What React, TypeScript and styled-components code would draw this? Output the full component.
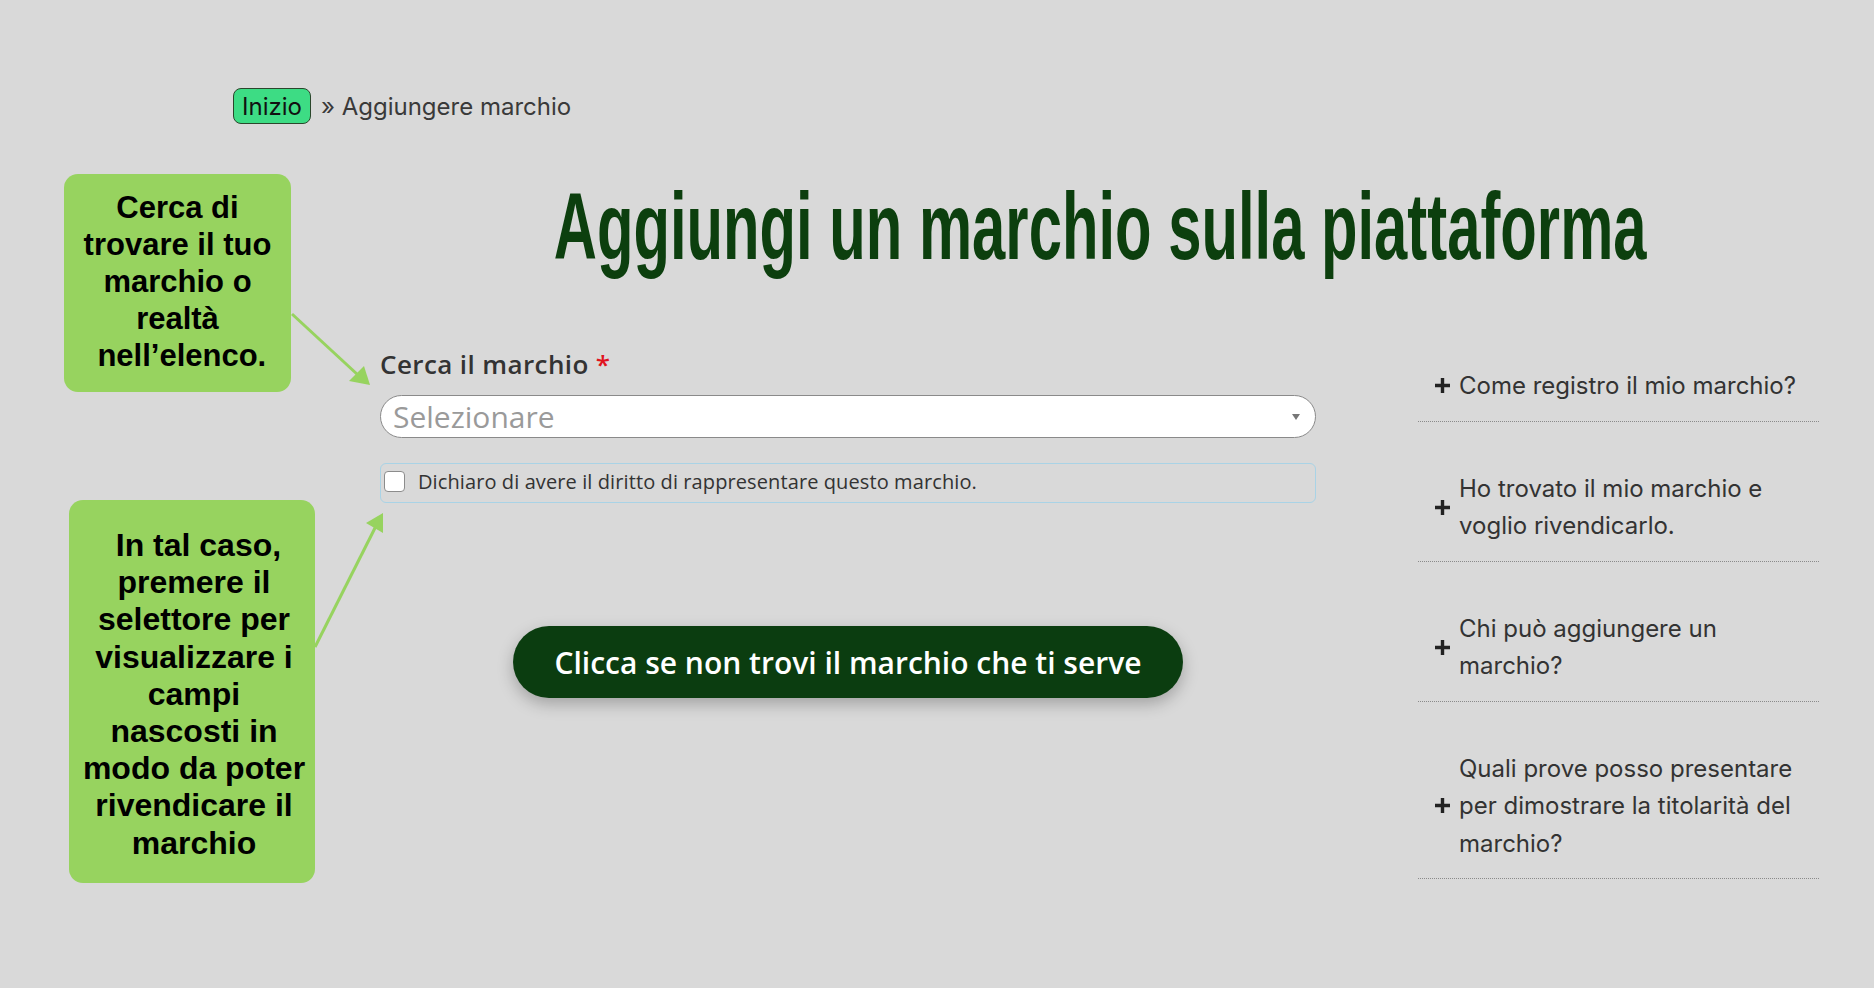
import React from "react";
import styled, { createGlobalStyle } from "styled-components";

const GlobalStyle = createGlobalStyle`
  html, body { margin: 0; padding: 0; }
  body { background: #d9d9d9; font-family: "Inter", "Liberation Sans", sans-serif; }
`;

const Page = styled.div`
  position: relative;
  width: 1874px;
  min-height: 988px;
  padding-top: 88px;
  box-sizing: border-box;
  overflow: hidden;
`;

const Breadcrumb = styled.nav`
  margin-left: 233px;
  display: flex;
  align-items: center;
  height: 36px;
  font-family: "Inter", "Liberation Sans", sans-serif;
  font-size: 24px;
  color: #3a3a3a;
`;

const HomeBadge = styled.a`
  display: flex;
  align-items: center;
  height: 36px;
  box-sizing: border-box;
  padding: 0 8px;
  border: 1px solid #2b462b;
  border-radius: 8px;
  background: #3ddc84;
  color: #111;
  text-decoration: none;
`;

const Crumb = styled.span`
  margin-left: 10px;
`;

const Content = styled.main`
  margin-left: 380px;
  width: 1440px;
`;

const TitleWrap = styled.div`
  margin-top: 56px;
  display: flex;
  justify-content: center;
  height: 94px;
`;

const Title = styled.h1`
  flex: none;
  margin: 0;
  font-family: "Liberation Sans", Arial, sans-serif;
  font-weight: 700;
  font-size: 94px;
  line-height: 94px;
  color: #0c3f0e;
  white-space: nowrap;
  transform: scaleX(0.636);
  transform-origin: center;
`;

const Row = styled.div`
  display: flex;
  margin-top: 76px;
`;

const FormCol = styled.section`
  width: 936px;
  display: flex;
  flex-direction: column;
`;

const Label = styled.label`
  font-family: "Open Sans", "Lato", sans-serif;
  font-weight: 600;
  font-size: 26px;
  letter-spacing: 0.4px;
  line-height: 29px;
  color: #333;
`;

const Required = styled.span`
  color: #e0141e;
  margin-left: 7px;
`;

const Select = styled.div`
  margin-top: 16px;
  height: 43px;
  box-sizing: border-box;
  border: 1px solid #8a8a8a;
  border-radius: 22px;
  background: #fff;
  display: flex;
  align-items: center;
  justify-content: space-between;
  padding: 0 15px 0 12px;
`;

const Placeholder = styled.span`
  font-family: "Open Sans", "Lato", sans-serif;
  font-size: 30px;
  color: #9a9a9a;
`;

const Caret = styled.span`
  width: 0;
  height: 0;
  border-left: 4px solid transparent;
  border-right: 4px solid transparent;
  border-top: 6px solid #777;
`;

const CheckRow = styled.div`
  margin-top: 25px;
  height: 40px;
  box-sizing: border-box;
  border: 1px solid #a9d3e6;
  border-radius: 6px;
  display: flex;
  align-items: center;
  padding: 0 0 3px 3px;
`;

const CheckBox = styled.span`
  width: 21px;
  height: 21px;
  box-sizing: border-box;
  border: 1px solid #8c8c8c;
  border-radius: 4px;
  background: #fff;
  flex: none;
`;

const CheckText = styled.span`
  margin-left: 13px;
  font-family: "Open Sans", "Lato", sans-serif;
  font-size: 20px;
  letter-spacing: 0.1px;
  color: #333;
`;

const CtaButton = styled.button`
  align-self: center;
  margin-top: 123px;
  width: 670px;
  height: 72px;
  border: none;
  border-radius: 36px;
  background: #0b3d10;
  color: #fff;
  font-family: "Open Sans", "Lato", sans-serif;
  font-weight: 600;
  font-size: 30px;
  box-shadow: 0 6px 16px rgba(0, 0, 0, 0.25);
  cursor: pointer;
`;

const FaqCol = styled.aside`
  margin-left: 102px;
  margin-top: 1px;
  width: 401px;
  display: flex;
  flex-direction: column;
  gap: 32px;
`;

const FaqItem = styled.div`
  display: flex;
  align-items: center;
  padding: 16px 10px 16px 16px;
  border-bottom: 1px dotted #8a8a8a;
  font-family: "Inter", "Liberation Sans", sans-serif;
  font-size: 24px;
  line-height: 37.5px;
  color: #333;
`;

const PlusIcon = styled.svg`
  flex: none;
  width: 17px;
  height: 17px;
  margin-right: 8px;
`;

const FaqText = styled.span`
  white-space: nowrap;
`;

const Callout = styled.div<{ $left: number; $top: number; $w: number; $h: number; $fs: number; $lh: number; $pt: number; $pl: number }>`
  position: absolute;
  left: ${(p) => p.$left}px;
  top: ${(p) => p.$top}px;
  width: ${(p) => p.$w}px;
  height: ${(p) => p.$h}px;
  box-sizing: border-box;
  padding-top: ${(p) => p.$pt}px;
  padding-left: ${(p) => p.$pl}px;
  border-radius: 14px;
  background: #97d35f;
  color: #000;
  font-family: "Liberation Sans", Arial, sans-serif;
  font-weight: 700;
  font-size: ${(p) => p.$fs}px;
  line-height: ${(p) => p.$lh}px;
  text-align: center;
  white-space: nowrap;
`;

const Arrows = styled.svg`
  position: absolute;
  left: 0;
  top: 0;
  width: 1874px;
  height: 988px;
  pointer-events: none;
`;

const Plus = () => (
  <PlusIcon viewBox="0 0 17 17">
    <path d="M8.5 1v15M1 8.5h15" stroke="#222" strokeWidth="3.4" fill="none" />
  </PlusIcon>
);

const faqs: React.ReactNode[] = [
  <>Come registro il mio marchio?</>,
  <>Ho trovato il mio marchio e<br />voglio rivendicarlo.</>,
  <>Chi può aggiungere un<br />marchio?</>,
  <>Quali prove posso presentare<br />per dimostrare la titolarità del<br />marchio?</>,
];

export default function App() {
  return (
    <>
      <GlobalStyle />
      <Page>
        <Breadcrumb>
          <HomeBadge href="#">Inizio</HomeBadge>
          <Crumb>» Aggiungere marchio</Crumb>
        </Breadcrumb>
        <Content>
          <TitleWrap>
            <Title>Aggiungi un marchio sulla piattaforma</Title>
          </TitleWrap>
          <Row>
            <FormCol>
              <Label>
                Cerca il marchio<Required>*</Required>
              </Label>
              <Select>
                <Placeholder>Selezionare</Placeholder>
                <Caret />
              </Select>
              <CheckRow>
                <CheckBox />
                <CheckText>Dichiaro di avere il diritto di rappresentare questo marchio.</CheckText>
              </CheckRow>
              <CtaButton>Clicca se non trovi il marchio che ti serve</CtaButton>
            </FormCol>
            <FaqCol>
              {faqs.map((q, i) => (
                <FaqItem key={i}>
                  <Plus />
                  <FaqText>{q}</FaqText>
                </FaqItem>
              ))}
            </FaqCol>
          </Row>
        </Content>

        <Callout $left={64} $top={174} $w={227} $h={218} $fs={31} $lh={37} $pt={15} $pl={0}>
          Cerca di<br />trovare il tuo<br />marchio o<br />realtà<br />&nbsp;nell’elenco.
        </Callout>
        <Callout $left={69} $top={500} $w={246} $h={383} $fs={32} $lh={37.2} $pt={27} $pl={4}>
          &nbsp;In tal caso,<br />premere il<br />selettore per<br />visualizzare i<br />campi<br />nascosti in<br />modo da poter<br />rivendicare il<br />marchio
        </Callout>

        <Arrows viewBox="0 0 1874 988">
          <line x1="292" y1="314" x2="358" y2="375" stroke="#97d35f" strokeWidth="3" />
          <polygon points="349,381 364,366 370,385" fill="#97d35f" />
          <line x1="315" y1="647" x2="376" y2="526" stroke="#97d35f" strokeWidth="3" />
          <polygon points="366,523 383,513 383,533" fill="#97d35f" />
        </Arrows>
      </Page>
    </>
  );
}
